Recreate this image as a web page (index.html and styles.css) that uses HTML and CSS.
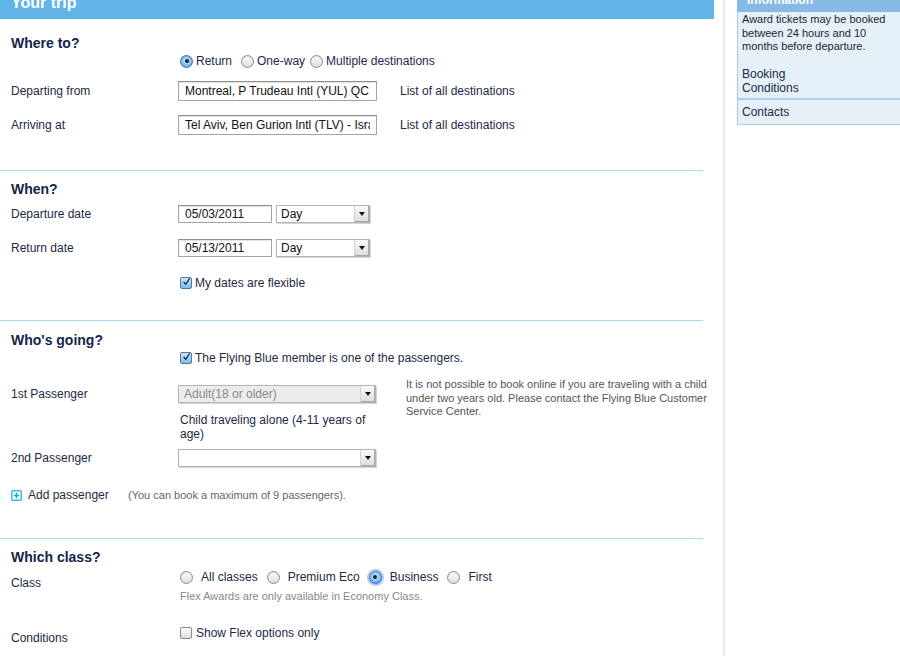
FILE: index.html
```html
<!DOCTYPE html>
<html>
<head>
<meta charset="utf-8">
<title>Your trip</title>
<link rel="stylesheet" href="styles.css">
</head>
<body>
<div class="page">
  <main class="main">
    <div class="trip-head"><div class="trip-title">Your trip</div></div>

    <section class="sec sec-where">
      <h2>Where to?</h2>
      <div class="row r-trip">
        <div class="lbl"></div>
        <label class="opt o-ret"><span class="radio on"></span>Return</label>
        <label class="opt o-one"><span class="radio"></span>One-way</label>
        <label class="opt"><span class="radio"></span>Multiple destinations</label>
      </div>
      <div class="row r-dep">
        <div class="lbl">Departing from</div>
        <input class="txt txt-wide" type="text" readonly value="Montreal, P Trudeau Intl (YUL) QC - Canada">
        <span class="link">List of all destinations</span>
      </div>
      <div class="row r-arr">
        <div class="lbl">Arriving at</div>
        <input class="txt txt-wide" type="text" readonly value="Tel Aviv, Ben Gurion Intl (TLV) - Israel">
        <span class="link">List of all destinations</span>
      </div>
    </section>

    <section class="sec sec-when">
      <h2>When?</h2>
      <div class="row r-depdate">
        <div class="lbl">Departure date</div>
        <input class="txt txt-date" type="text" readonly value="05/03/2011">
        <div class="sel sel-day"><span class="sel-val">Day</span><span class="sel-btn"></span></div>
      </div>
      <div class="row r-retdate">
        <div class="lbl">Return date</div>
        <input class="txt txt-date" type="text" readonly value="05/13/2011">
        <div class="sel sel-day"><span class="sel-val">Day</span><span class="sel-btn"></span></div>
      </div>
      <div class="row r-flex">
        <div class="lbl"></div>
        <label class="opt"><span class="check on"><svg viewBox="0 0 12 12" width="12" height="12"><path d="M2.6 6.2 L5 9 L9.8 1.8" fill="none" stroke="#1b2a40" stroke-width="1.8" stroke-linecap="round" stroke-linejoin="round"/></svg></span>My dates are flexible</label>
      </div>
    </section>

    <section class="sec sec-who">
      <h2>Who's going?</h2>
      <div class="row r-member">
        <div class="lbl"></div>
        <label class="opt"><span class="check on"><svg viewBox="0 0 12 12" width="12" height="12"><path d="M2.6 6.2 L5 9 L9.8 1.8" fill="none" stroke="#1b2a40" stroke-width="1.8" stroke-linecap="round" stroke-linejoin="round"/></svg></span>The Flying Blue member is one of the passengers.</label>
      </div>
      <div class="pax-grid">
        <div class="lbl pax1-lbl">1st Passenger</div>
        <div class="pax1-ctl">
          <div class="sel sel-pax disabled"><span class="sel-val">Adult(18 or older)</span><span class="sel-btn"></span></div>
          <p class="child">Child traveling alone (4-11 years of age)</p>
        </div>
        <p class="note">It is not possible to book online if you are traveling with a child under two years old. Please contact the Flying Blue Customer Service Center.</p>
      </div>
      <div class="row r-pax2">
        <div class="lbl">2nd Passenger</div>
        <div class="sel sel-pax"><span class="sel-val"></span><span class="sel-btn"></span></div>
      </div>
      <div class="row r-add">
        <span class="add-icon"><svg viewBox="0 0 11 11" width="11" height="11"><rect x="0.75" y="0.75" width="9.5" height="9.5" rx="1" fill="#ffffff" stroke="#3bbfe0" stroke-width="1.5"/><path d="M5.5 2.8 V8.2 M2.8 5.5 H8.2" stroke="#1fa8d0" stroke-width="1.6"/></svg></span>
        <span class="add-text">Add passenger</span>
        <span class="add-note">(You can book a maximum of 9 passengers).</span>
      </div>
    </section>

    <section class="sec sec-class">
      <h2>Which class?</h2>
      <div class="class-grid">
        <div class="lbl class-lbl">Class</div>
        <div class="class-ctl">
          <div class="row class-opts">
            <label class="opt c-opt"><span class="radio"></span>All classes</label>
            <label class="opt c-opt"><span class="radio"></span>Premium Eco</label>
            <label class="opt c-opt"><span class="radio on focus"></span>Business</label>
            <label class="opt c-opt"><span class="radio"></span>First</label>
          </div>
          <p class="flex-note">Flex Awards are only available in Economy Class.</p>
        </div>
        <div class="lbl cond-lbl">Conditions</div>
        <div class="cond-ctl">
          <label class="opt"><span class="check"></span>Show Flex options only</label>
        </div>
      </div>
    </section>
  </main>

  <div class="divider"></div>

  <aside class="side">
    <div class="side-head"><div class="side-title">Information</div></div>
    <div class="side-body">
      <p class="side-text">Award tickets may be booked between 24 hours and 10 months before departure.</p>
      <p class="side-link">Booking<br>Conditions</p>
    </div>
    <div class="side-row">Contacts</div>
  </aside>
</div>
</body>
</html>
```

FILE: styles.css
```css
* { box-sizing: border-box; }
html, body { margin: 0; padding: 0; }
body {
  width: 900px;
  height: 656px;
  overflow: hidden;
  background: #ffffff;
  font-family: "Liberation Sans", Arial, Helvetica, sans-serif;
  font-size: 12px;
  color: #1b2944;
}
p { margin: 0; }
h2 {
  margin: 0;
  font-size: 14px;
  line-height: 18px;
  font-weight: bold;
  color: #14254a;
}

.page { display: flex; align-items: stretch; height: 656px; }

.main { width: 714px; flex: none; }

.trip-head {
  height: 19px;
  background: #62b4e8;
  overflow: hidden;
  padding-left: 11px;
}
.trip-title {
  margin-top: -6px;
  font-size: 16px;
  line-height: 18px;
  font-weight: bold;
  color: #ffffff;
}

.sec {
  width: 703px;
  padding-left: 11px;
  border-bottom: 1px solid #a9d6f1;
}
.sec-class { border-bottom: none; }

.row { display: flex; align-items: center; }
.lbl { width: 167px; flex: none; line-height: 14px; }

.opt { display: inline-flex; align-items: center; line-height: 16px; cursor: default; }

/* radios */
.radio {
  width: 13px;
  height: 13px;
  border-radius: 50%;
  border: 1px solid #8d8d8d;
  background: linear-gradient(#ffffff, #dcdcdc);
  box-shadow: inset 0 1px 1px rgba(0,0,0,0.12);
  flex: none;
  position: relative;
}
.radio.on {
  border-color: #3f6fa8;
  background: radial-gradient(circle at 50% 40%, #d2ecff 0%, #86bff0 55%, #3f86d3 100%);
}
.radio.on::after {
  content: "";
  position: absolute;
  left: 3.5px;
  top: 3.5px;
  width: 4px;
  height: 4px;
  border-radius: 50%;
  background: #13243d;
}
.radio.focus { box-shadow: 0 0 0 2px rgba(90,160,230,0.55); }

/* checkboxes */
.check {
  width: 12px;
  height: 12px;
  border: 1px solid #8a8a8a;
  border-radius: 2px;
  background: linear-gradient(#ffffff, #dedede);
  flex: none;
  display: inline-flex;
  align-items: center;
  justify-content: center;
  overflow: visible;
}
.check.on {
  border-color: #4c78aa;
  background: linear-gradient(#cfe7fb, #7fb6ea);
}
.check svg { display: block; margin-top: -2px; margin-left: 1px; }

/* Where to */
.sec-where { padding-top: 15px; padding-bottom: 35px; }
.r-trip { margin-top: 1px; height: 16px; }
.r-trip .lbl { width: 169px; }
.r-trip .radio { margin-right: 3px; }
.o-ret { margin-right: 9px; }
.o-one { margin-right: 5px; }
.r-dep { margin-top: 12px; }
.r-arr { margin-top: 14px; }

.txt {
  height: 20px;
  margin: 0;
  border: 1px solid #a4a4a4;
  border-top-color: #8e8e8e;
  border-radius: 0;
  box-shadow: inset 0 1px 1px rgba(0,0,0,0.12);
  background: #ffffff;
  padding: 0 6px;
  font-family: "Liberation Sans", Arial, Helvetica, sans-serif;
  font-size: 12px;
  line-height: 18px;
  color: #111111;
  flex: none;
  outline: none;
}
.txt-wide { width: 199px; }
.txt-date { width: 94px; height: 18px; line-height: 16px; }
.link { margin-left: 23px; color: #1b2944; }

/* selects */
.sel {
  height: 18px;
  border: 1px solid #b4b4b4;
  background: #ffffff;
  display: flex;
  align-items: stretch;
  flex: none;
  box-shadow: 1px 1px 0 #d4d4d4;
}
.sel-val {
  flex: 1;
  padding-left: 4px;
  line-height: 16px;
  color: #111111;
  white-space: nowrap;
  overflow: hidden;
}
.sel-btn {
  width: 15px;
  flex: none;
  border-left: 1px solid #d0d0d0;
  background: linear-gradient(#fafafa, #dcdcdc);
  box-shadow: inset -1px -1px 0 #a8a8a8;
  position: relative;
}
.sel-btn::after {
  content: "";
  position: absolute;
  left: 4px;
  top: 6px;
  border-left: 3.5px solid transparent;
  border-right: 3.5px solid transparent;
  border-top: 4px solid #111111;
}
.sel-day { width: 94px; margin-left: 4px; }
.sel-day .sel-val { padding-left: 4px; }
.sel-pax { width: 198px; }
.sel.disabled { background: #ececec; }
.sel.disabled .sel-val { color: #8a8a8a; padding-left: 5px; }

/* When */
.sec-when { padding-top: 9px; padding-bottom: 29px; }
.r-depdate { margin-top: 7px; }
.r-retdate { margin-top: 16px; }
.r-flex { margin-top: 18px; height: 16px; }
.r-flex .lbl, .r-member .lbl { width: 169px; }
.r-flex .check, .r-member .check { margin-right: 3px; }

/* Who */
.sec-who { padding-top: 10px; padding-bottom: 35px; }
.r-member { margin-top: 1px; height: 16px; }
.pax-grid {
  display: grid;
  grid-template-columns: 167px 228px 308px;
  margin-top: 19px;
}
.pax1-lbl { padding-top: 0; line-height: 18px; }
.child {
  margin-top: 10px;
  width: 195px;
  padding-left: 2px;
  line-height: 14px;
}
.note {
  font-size: 11px;
  line-height: 13.5px;
  color: #555555;
  margin-top: -7px;
  width: 306px;
}
.r-pax2 { margin-top: 8px; }
.r-add { margin-top: 20px; height: 16px; }
.add-icon { display: inline-flex; width: 11px; height: 11px; margin-right: 6px; }
.add-icon svg { display: block; }
.add-text { width: 100px; font-size: 12px; }
.add-note { font-size: 11px; color: #666666; }

/* Class */
.sec-class { padding-top: 9px; }
.class-grid {
  display: grid;
  grid-template-columns: 167px 1fr;
}
.class-lbl { padding-top: 10px; }
.class-opts { margin-top: 3px; height: 16px; padding-left: 2px; }
.c-opt { margin-right: 9px; }
.c-opt .radio { margin-right: 8px; }
.flex-note {
  padding-left: 2px;
  font-size: 11px;
  line-height: 13px;
  color: #888888;
  margin-top: 5px;
}
.cond-lbl { padding-top: 28px; }
.cond-ctl { padding-top: 22px; padding-left: 2px; }
.cond-ctl .check { margin-right: 4px; }

/* divider */
.divider {
  width: 2px;
  flex: none;
  margin-left: 9px;
  background: #ecebe7;
}

/* sidebar */
.side { margin-left: 12px; flex: 1; }
.side-head {
  height: 12px;
  background: #86b9e4;
  overflow: hidden;
  padding-left: 10px;
}
.side-title {
  margin-top: -7px;
  font-size: 12px;
  line-height: 14px;
  font-weight: bold;
  color: #ffffff;
}
.side-body {
  background: #e6f0f8;
  border-left: 1px solid #a6cbea;
  border-bottom: 2px solid #a9cde9;
  padding: 1px 4px 4px 4px;
  height: 88px;
}
.side-text {
  font-size: 11px;
  line-height: 13.5px;
  color: #1c2533;
  width: 155px;
}
.side-link {
  margin-top: 13px;
  line-height: 14px;
  color: #1b2944;
}
.side-row {
  background: #e6f0f8;
  border-left: 1px solid #a6cbea;
  border-bottom: 1px solid #a9cde9;
  height: 25px;
  padding-left: 4px;
  line-height: 24px;
  color: #1b2944;
}
```
